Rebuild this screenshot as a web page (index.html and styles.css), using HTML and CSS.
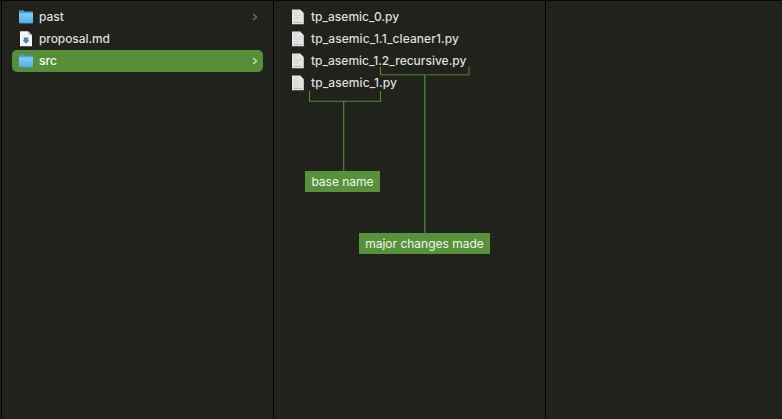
FILE: index.html
```html
<!DOCTYPE html>
<html lang="en">
<head>
<meta charset="utf-8">
<title>Files</title>
<link rel="stylesheet" href="styles.css">
</head>
<body>
<svg width="0" height="0" class="defs">
  <defs>
    <linearGradient id="blue" x1="0" y1="0" x2="0" y2="1"><stop offset="0" stop-color="#7dcdf9"/><stop offset="1" stop-color="#55aee5"/></linearGradient>
    <symbol id="folder" viewBox="0 0 16 16">
      <path d="M1 2.4Q1 1.3 2 1.3H5.2L6.6 2.5H14Q15 2.5 15 3.5V8H1Z" fill="#3f9bd3"/>
      <path d="M1 4.4H15V13.3Q15 14.2 14.2 14.2H1.8Q1 14.2 1 13.3Z" fill="url(#blue)"/>
      <path d="M1 4.2H15" stroke="#8ad5fb" stroke-width=".6"/>
      <path d="M1.3 13.9H14.7" stroke="#439bd1" stroke-width=".6"/>
    </symbol>
    <symbol id="markdown" viewBox="0 0 16 16">
      <path d="M2 .3H10L14 4.3V15.3H2Z" fill="#f5f7f7"/>
      <path d="M10 .3V4.3H14Z" fill="#c9cdce"/>
      <path d="M5.8 6 7 6.7 8 6 9 6.7 10.2 6V9.2H11.4L8 12.8 4.6 9.2H5.8Z" fill="#4f88a5"/>
    </symbol>
    <symbol id="python" viewBox="0 0 16 16">
      <path d="M2 .4H9.8L13.8 4.4V15.3H2Z" fill="#e6e6e6"/>
      <path d="M9.8 .4V4.4H13.8Z" fill="#fff" stroke="#b5b5b5" stroke-width=".4"/>
      <path d="M3.6 2.5H7.6M3.6 4.5H7M3.6 6.5H11M3.6 8.5H10M3.6 10.5H8" stroke="#c6c6c6" stroke-width=".7" stroke-dasharray="2 .6"/>
      <path d="M3.6 13.4H12.2" stroke="#999" stroke-width=".8" stroke-dasharray="2 .6"/>
    </symbol>
    <symbol id="chevron" viewBox="0 0 6 8">
      <path d="M1.2 1 4.5 4 1.2 7" fill="none" stroke="currentColor" stroke-width="1.2"/>
    </symbol>
  </defs>
</svg>
<main class="browser">
  <section class="column first">
    <div class="row"><svg class="icon"><use href="#folder"/></svg><span class="name">past</span><svg class="chevron"><use href="#chevron"/></svg></div>
    <div class="row"><svg class="icon"><use href="#markdown"/></svg><span class="name proposal">proposal.md</span></div>
    <div class="row selected"><svg class="icon"><use href="#folder"/></svg><span class="name">src</span><svg class="chevron"><use href="#chevron"/></svg></div>
  </section>
  <section class="column second">
    <div class="row"><svg class="icon"><use href="#python"/></svg><span class="name">tp_asemic_0.py</span></div>
    <div class="row"><svg class="icon"><use href="#python"/></svg><span class="name cleaner">tp_asemic_1.1_cleaner1.py</span></div>
    <div class="row"><svg class="icon"><use href="#python"/></svg><span class="name">tp_asemic_1.2_recursive.py</span></div>
    <div class="row"><svg class="icon"><use href="#python"/></svg><span class="name single">tp_asemic_1.py</span></div>
  </section>
  <section class="column third"></section>
</main>
<svg class="connectors" viewBox="0 0 782 419" fill="none" stroke="#528c36">
  <path d="M309.5 91V101.3H380.5V91M343.7 101V171" stroke-width="1.1"/>
  <path d="M380.5 74.8H469V67" stroke="#3f652b" stroke-width="1.6"/>
  <path d="M380.5 67V75M424.8 75V233" stroke-width="1.2"/>
</svg>
<div class="tag base">base name</div>
<div class="tag changes">major changes made</div>
</body>
</html>
```
FILE: styles.css
```css
* { box-sizing: border-box; }
body {
  margin: 0;
  width: 782px;
  height: 419px;
  overflow: hidden;
  position: relative;
  background: #22221d;
  color: #dededc;
  font-family: Inter, "Liberation Sans", sans-serif;
  font-size: 12px;
}
.defs { position: absolute; }
.browser {
  display: grid;
  grid-template-columns: 274px 272px 1fr;
  height: 419px;
  border-top: 1px solid #080807;
}
.column { padding: 5px 10px 0; border-right: 1px solid #000; }
.first { border-left: 1px solid #000; margin-left: 1px; }
.third { border-right: 0; }
.row {
  display: flex;
  align-items: center;
  height: 22px;
  padding: 0 5px 0 6px;
  border-radius: 5px;
}
.selected { background: #578f39; color: #fff; }
.icon { width: 16px; height: 16px; margin-right: 5px; flex: none; }
.name { font-weight: 500; line-height: 22px; white-space: nowrap; }
.proposal { letter-spacing: -0.08px; }
.cleaner { letter-spacing: 0.08px; }
.single { letter-spacing: 0.08px; }
.chevron { width: 6px; height: 8px; margin-left: auto; color: #777773; }
.selected .chevron { color: #dbe9d4; }
.connectors { position: absolute; inset: 0; width: 782px; height: 419px; }
.tag {
  position: absolute;
  height: 21px;
  line-height: 21px;
  text-align: center;
  white-space: nowrap;
  background: #57923b;
  color: #eef7e9;
}
.base { left: 305px; top: 171px; width: 75px; }
.changes { left: 359px; top: 233px; width: 131px; }
```
